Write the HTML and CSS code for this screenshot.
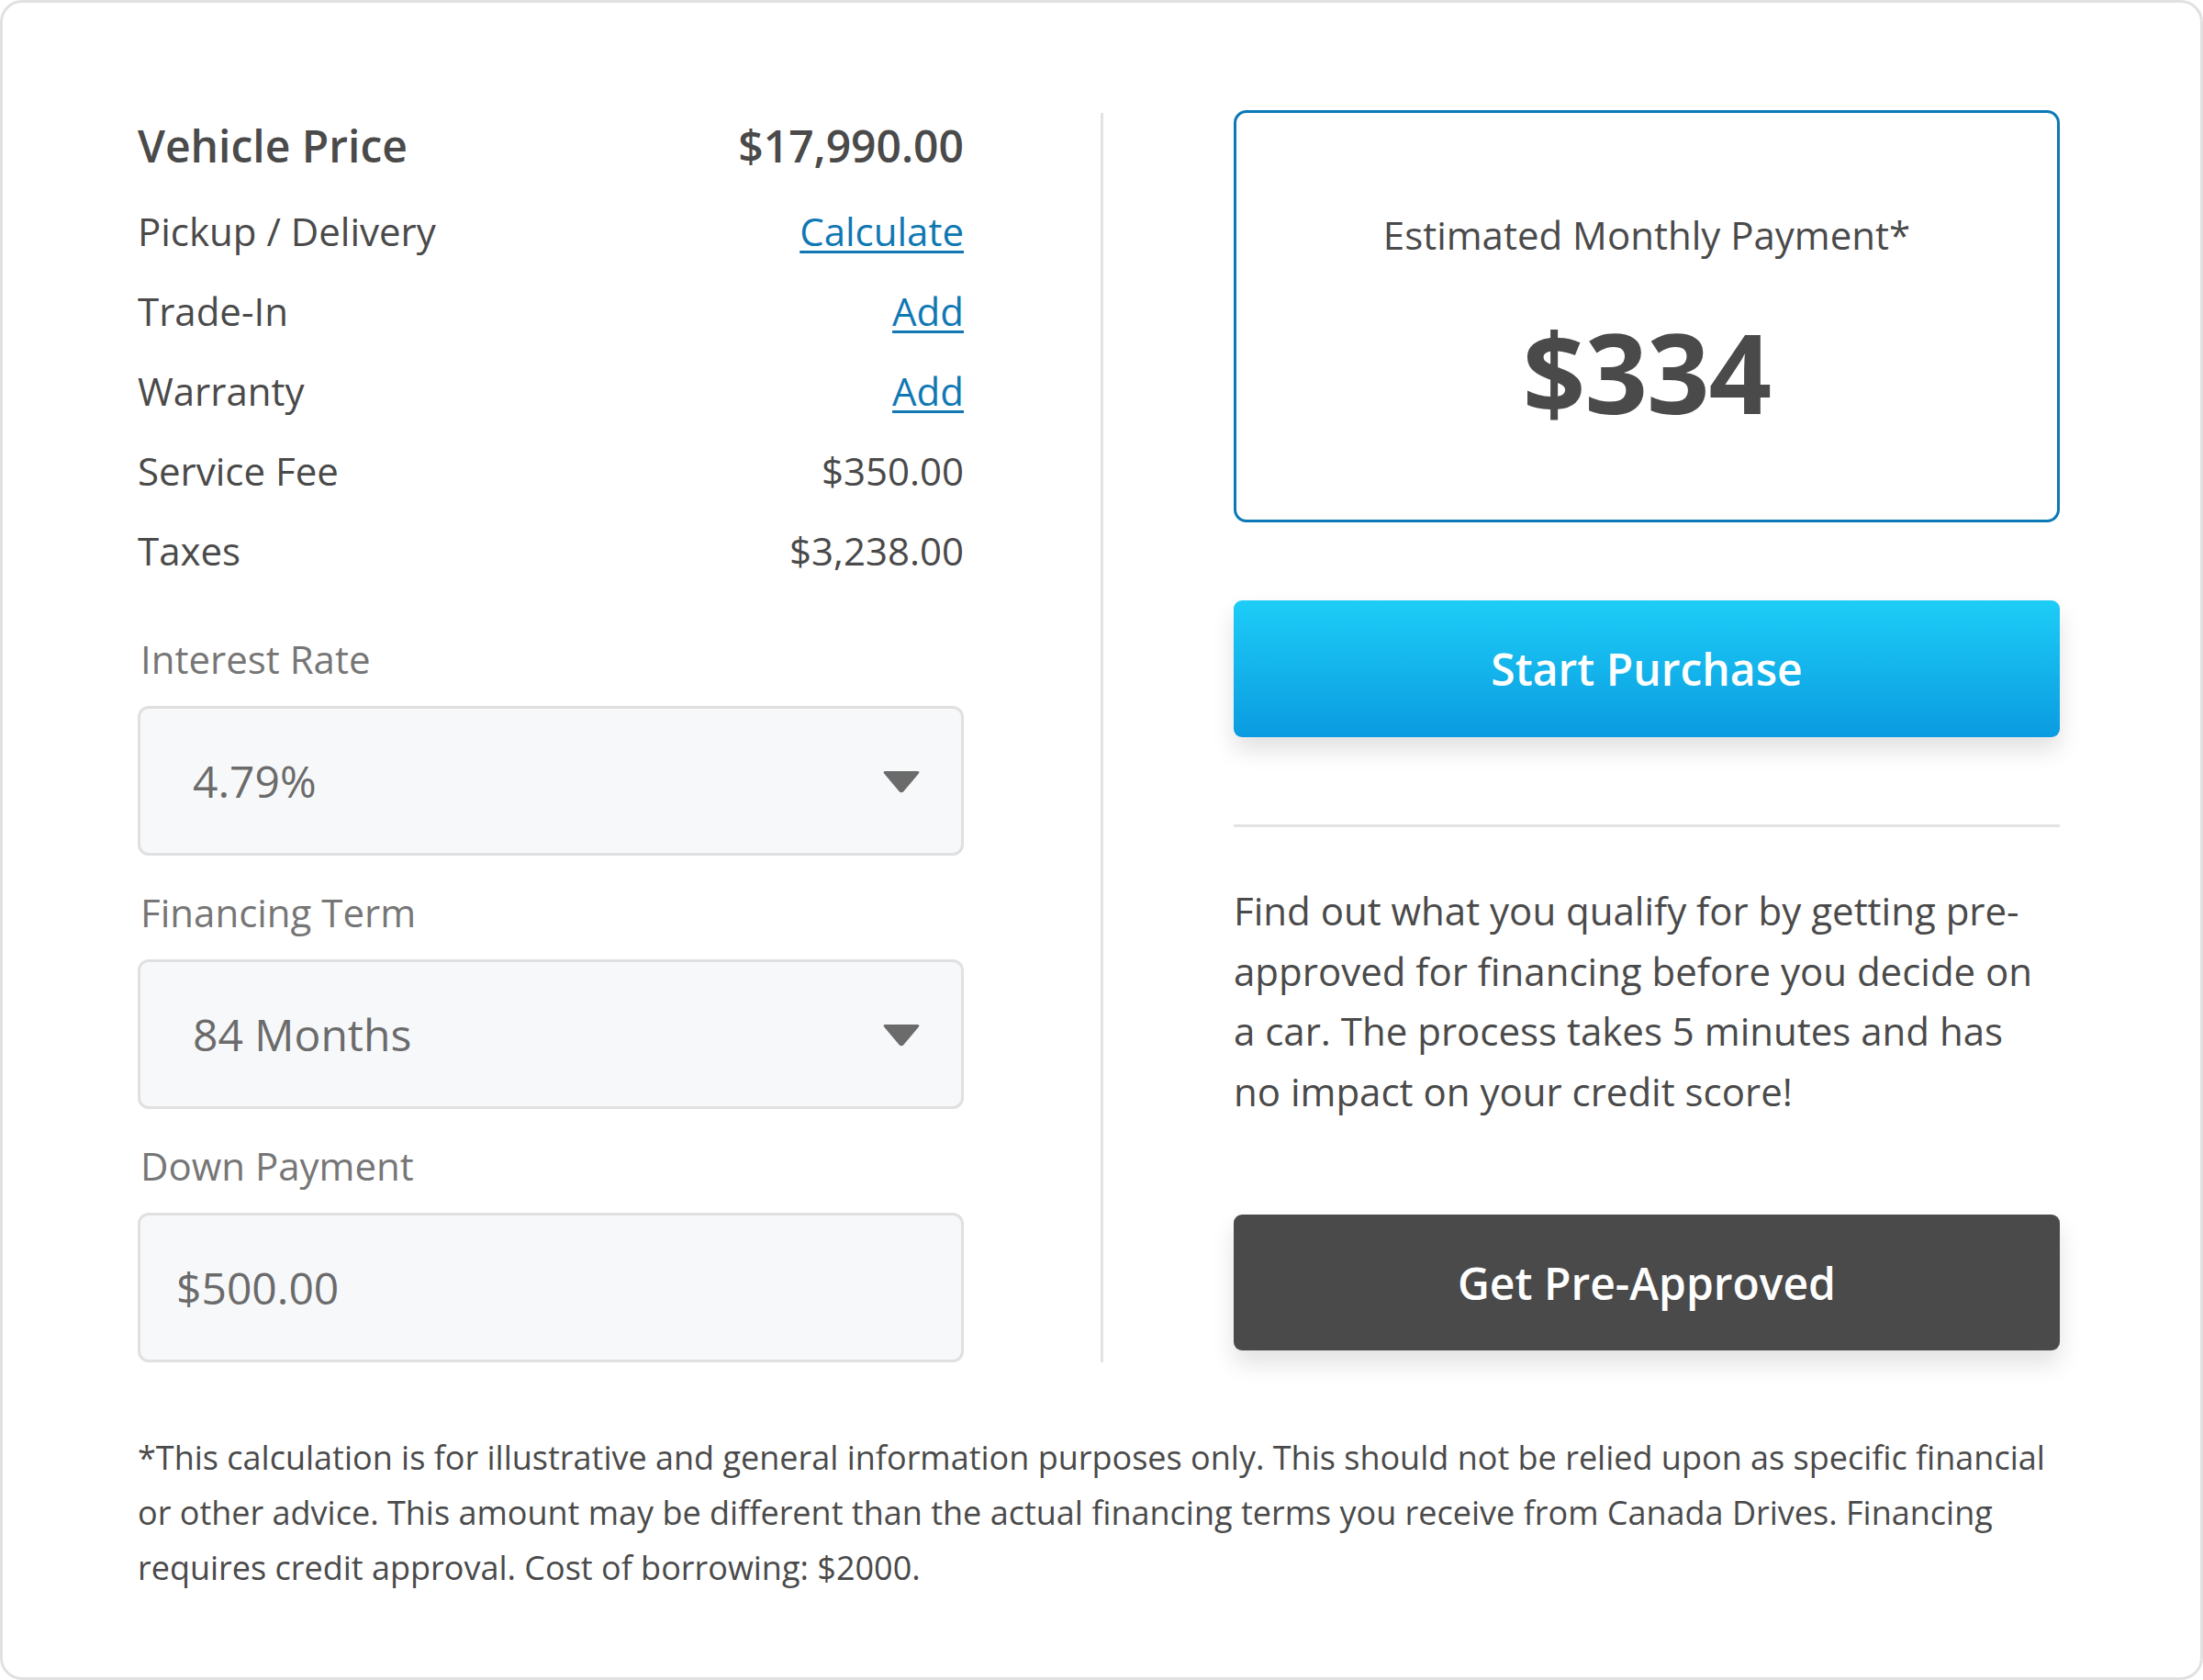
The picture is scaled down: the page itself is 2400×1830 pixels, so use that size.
FILE: index.html
```html
<!DOCTYPE html>
<html lang="en">
<head>
<meta charset="utf-8">
<title>Financing Calculator</title>
<link rel="stylesheet" href="styles.css">
</head>
<body>
<div class="card">
  <div class="main">
    <div class="left">
      <div class="row row-head"><span>Vehicle Price</span><span>$17,990.00</span></div>
      <div class="row"><span>Pickup / Delivery</span><a href="#" class="link">Calculate</a></div>
      <div class="row"><span>Trade-In</span><a href="#" class="link">Add</a></div>
      <div class="row"><span>Warranty</span><a href="#" class="link">Add</a></div>
      <div class="row"><span>Service Fee</span><span>$350.00</span></div>
      <div class="row"><span>Taxes</span><span>$3,238.00</span></div>

      <div class="field field-first">
        <div class="label">Interest Rate</div>
        <div class="box select"><span>4.79%</span>
          <svg class="caret" width="42" height="24" viewBox="0 0 42 24"><path d="M4 0 H38 Q42 0 39.5 3 L23.5 22 Q21 24.5 18.5 22 L2.5 3 Q0 0 4 0 Z" fill="#6b6b6b"/></svg>
        </div>
      </div>
      <div class="field">
        <div class="label">Financing Term</div>
        <div class="box select"><span>84 Months</span>
          <svg class="caret" width="42" height="24" viewBox="0 0 42 24"><path d="M4 0 H38 Q42 0 39.5 3 L23.5 22 Q21 24.5 18.5 22 L2.5 3 Q0 0 4 0 Z" fill="#6b6b6b"/></svg>
        </div>
      </div>
      <div class="field">
        <div class="label">Down Payment</div>
        <div class="box input"><span>$500.00</span></div>
      </div>
    </div>

    <div class="sep"></div>

    <div class="right">
      <div class="estimate">
        <div class="est-title">Estimated Monthly Payment*</div>
        <div class="est-amount">$334</div>
      </div>
      <button class="btn btn-primary">Start Purchase</button>
      <div class="hr"></div>
      <p class="pitch">Find out what you qualify for by getting pre-approved for financing before you decide on a car. The process takes 5 minutes and has no impact on your credit score!</p>
      <button class="btn btn-dark">Get Pre-Approved</button>
    </div>
  </div>
  <p class="footnote">*This calculation is for illustrative and general information purposes only. This should not be relied upon as specific financial or other advice. This amount may be different than the actual financing terms you receive from Canada Drives. Financing requires credit approval. Cost of borrowing: $2000.</p>
</div>
</body>
</html>
```

FILE: styles.css
```css
* { box-sizing: border-box; }
html, body { margin: 0; padding: 0; background: #ffffff; }
body { font-family: "Open Sans", "Noto Sans", sans-serif; color: #4a4a4a; }

.card {
  width: 2400px;
  height: 1830px;
  border: 3px solid #e1e1e1;
  border-radius: 24px;
  padding: 117px 153px 0 147px;
  background: #fff;
}

.main { display: flex; align-items: stretch; }

.left { width: 900px; flex: none; }

.row {
  display: flex;
  justify-content: space-between;
  font-size: 42px;
  line-height: 87px;
  color: #4a4a4a;
}
.row-head {
  font-size: 48px;
  font-weight: 600;
  line-height: 78px;
  margin-bottom: 10px;
}
.link {
  color: #0f78b3;
  text-decoration: underline;
  text-decoration-thickness: 3px;
  text-underline-offset: 5px;
}

.field { margin-top: 32px; }
.field-first { margin-top: 45px; }
.label {
  font-size: 42px;
  line-height: 60px;
  color: #767676;
  margin-bottom: 21px;
  padding-left: 3px;
}
.box {
  height: 163px;
  border: 3px solid #e0e0e0;
  border-radius: 12px;
  background: #f7f8fa;
  display: flex;
  align-items: center;
  justify-content: space-between;
  color: #6b6b6b;
  font-size: 48px;
}
.select { padding: 0 44px 0 57px; }
.input { padding: 0 40px 0 39px; }
.caret { display: block; margin-top: 2px; }

.sep {
  width: 3px;
  flex: none;
  background: #e3e3e3;
  margin: 3px 142px 0 149px;
}

.right { width: 900px; flex: none; display: flex; flex-direction: column; }

.estimate {
  height: 449px;
  border: 3px solid #0a79b5;
  border-radius: 14px;
  text-align: center;
  padding-top: 104px;
}
.est-title { font-size: 42px; color: #4a4a4a; }
.est-amount {
  font-size: 120px;
  font-weight: 700;
  color: #4a4a4a;
  margin-top: 39px;
  line-height: normal;
  letter-spacing: -1px;
}

.btn {
  display: block;
  width: 100%;
  border: none;
  border-radius: 9px;
  font-family: "Open Sans", "Noto Sans", sans-serif;
  font-weight: 600;
  font-size: 48px;
  color: #fff;
  cursor: pointer;
}
.btn-primary {
  height: 149px;
  margin-top: 85px;
  background: linear-gradient(to bottom, #1dcdf7 0%, #0a9be0 100%);
  box-shadow: 0 14px 26px rgba(0, 0, 0, 0.12);
}
.btn-dark {
  height: 148px;
  margin-top: 102px;
  background: #4a4a4a;
  box-shadow: 0 14px 26px rgba(0, 0, 0, 0.12);
}

.hr { height: 3px; background: #e3e3e3; margin-top: 95px; }

.pitch {
  margin: 58px 0 0 0;
  padding-right: 20px;
  font-size: 42px;
  line-height: 65.5px;
  color: #4a4a4a;
}

.footnote {
  margin: 74px 0 0 0;
  font-size: 36px;
  line-height: 60px;
  color: #4a4a4a;
}
```
